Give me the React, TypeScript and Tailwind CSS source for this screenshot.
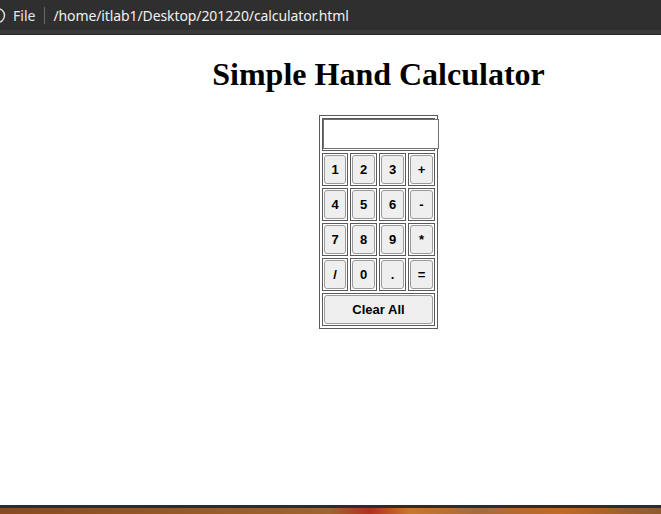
const keys = ['1', '2', '3', '+', '4', '5', '6', '-', '7', '8', '9', '*', '/', '0', '.', '='];

const CalcButton = ({ label, wide }: { label: string; wide?: boolean }) => (
  <div className={`border border-[#5a5a5a] p-px h-[33px] ${wide ? 'col-span-4' : ''}`}>
    <button className="w-full h-full rounded-[3px] border border-[#9a9a9a] bg-[#efefef] text-[13px] font-bold text-black [font-family:'Liberation_Sans',Arial,sans-serif]">
      {label}
    </button>
  </div>
);

const App = () => {
  return (
    <div className="w-[661px] h-[514px] overflow-hidden flex flex-col bg-white">
      {/* browser address bar */}
      <div className="h-[35px] shrink-0 flex flex-col bg-[#2f2f2f]">
        <div className="relative h-[30px] flex items-center text-[14px] [font-family:'Noto_Sans',sans-serif]">
          <svg className="absolute left-[-11px] top-[7px]" width="17" height="17" viewBox="0 0 17 17">
            <circle cx="8.5" cy="8.5" r="7" fill="none" stroke="#dcdcdc" strokeWidth="1.5" />
          </svg>
          <span className="ml-[13px] text-[#e6e6e6]">File</span>
          <span className="ml-[9px] h-[17px] w-px bg-[#6a6a6a]" />
          <span className="ml-[8px] text-[#f0f0f0] tracking-[-0.1px]">/home/itlab1/Desktop/201220/calculator.html</span>
        </div>
        <div className="h-[4px] bg-[#3a3a3a]" />
        <div className="h-px bg-[#262626]" />
      </div>

      <div className="flex-1 w-[757px] flex flex-col items-center">
        <h1 className="mt-[21px] text-[32px] leading-[37px] font-bold text-black [font-family:'Liberation_Serif','Times_New_Roman',serif]">
          Simple Hand Calculator
        </h1>

        <div className="mt-[22px] border border-[#5a5a5a] p-[2px] grid grid-cols-[26px_27px_27px_27px] gap-[2px]">
          <div className="col-span-4 h-[33px] border border-[#5a5a5a]">
            <input
              type="text"
              className="block w-[116px] h-[30px] border border-[#6f6f6f] bg-white outline-none"
            />
          </div>
          {keys.map((k) => (
            <CalcButton key={k} label={k} />
          ))}
          <CalcButton label="Clear All" wide />
        </div>
      </div>

      {/* desktop underneath */}
      <div className="h-[3px] shrink-0 bg-[#2c2c2c]" />
      <div className="h-[6px] shrink-0 bg-[linear-gradient(90deg,#8a4a1e_0%,#9a5a26_30%,#a0642c_50%,#b0321e_56%,#c8782e_62%,#a86a3a_72%,#c06a26_85%,#8e5a2e_100%)]" />
    </div>
  );
};

export default App;
